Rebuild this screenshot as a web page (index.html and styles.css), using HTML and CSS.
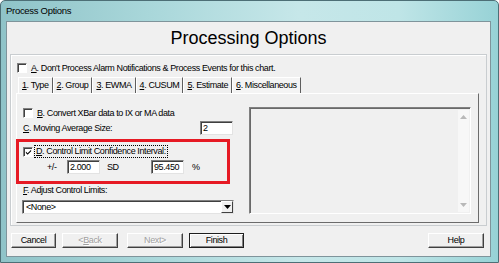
FILE: index.html
```html
<!DOCTYPE html>
<html lang="en">
<head>
    <meta charset="UTF-8">
    <title>Process Options</title>
    <link rel="stylesheet" href="styles.css">
</head>
<body>
    <div class="window">
        <div class="titlebar">Process Options</div>
        <div class="client">
            <h1>Processing Options</h1>

            <div class="group">
                <div class="check-row row-a">
                    <span class="box"></span>
                    <span><u>A</u>. Don't Process Alarm Notifications &amp; Process Events for this chart.</span>
                </div>

                <div class="tabs">
                    <span class="tab"><u>1</u>. Type</span>
                    <span class="tab"><u>2</u>. Group</span>
                    <span class="tab"><u>3</u>. EWMA</span>
                    <span class="tab"><u>4</u>. CUSUM</span>
                    <span class="tab"><u>5</u>. Estimate</span>
                    <span class="tab active"><u>6</u>. Miscellaneous</span>
                </div>

                <div class="page">
                    <div class="left">
                        <div class="check-row row-b">
                            <span class="box"></span>
                            <span><u>B</u>. Convert XBar data to IX or MA data</span>
                        </div>
                        <div class="row-c">
                            <span><u>C</u>. Moving Average Size:</span>
                            <span class="field size">2</span>
                        </div>
                        <div class="highlight">
                            <div class="check-row row-d">
                                <span class="box">
                                    <svg width="8" height="8" viewBox="0 0 8 8"><path d="M1 3.5 L3 5.5 L7 1.5 L7 3 L3 7 L1 5 Z" fill="#000"/></svg>
                                </span>
                                <span class="focus"><u>D</u>. Control Limit Confidence Interval:</span>
                            </div>
                            <div class="interval">
                                <span class="pm">+/-</span>
                                <span class="field num">2.000</span>
                                <span class="sd">SD</span>
                                <span class="field num">95.450</span>
                                <span class="pct">%</span>
                            </div>
                        </div>
                        <div class="label-f"><u>F</u>. Adjust Control Limits:</div>
                        <div class="combo">
                            <span class="combo-text">&lt;None&gt;</span>
                            <span class="combo-btn">
                                <svg width="7" height="4" viewBox="0 0 7 4"><path d="M0 0 H7 L3.5 4 Z" fill="#000"/></svg>
                            </span>
                        </div>
                    </div>
                    <div class="listbox">
                        <div class="scroll">
                            <svg width="7" height="4" viewBox="0 0 7 4"><path d="M0 4 H7 L3.5 0 Z" fill="#b8b8b8"/></svg>
                            <svg width="7" height="4" viewBox="0 0 7 4"><path d="M0 0 H7 L3.5 4 Z" fill="#b8b8b8"/></svg>
                        </div>
                    </div>
                </div>
            </div>

            <div class="buttons">
                <span class="btn cancel">Cancel</span>
                <span class="btn back disabled">&lt;<u>B</u>ack</span>
                <span class="btn next disabled">Next&gt;</span>
                <span class="btn finish">Finish</span>
                <span class="btn help">Help</span>
            </div>
        </div>
    </div>
</body>
</html>
```

FILE: styles.css
```css
body {
    margin: 0;
    font-family: "Liberation Sans", Arial, sans-serif;
    font-size: 9px;
    letter-spacing: -0.4px;
    color: #000;
}
.window {
    box-sizing: border-box;
    width: 499px;
    height: 263px;
    border: 1px solid #4d6f76;
    border-radius: 5px 5px 0 0;
    padding: 0 7px 5px 5px;
    display: flex;
    flex-direction: column;
    background: linear-gradient(90deg, #8fc3c8 0%, #a9d7da 30%, #c6e7e9 60%, #bfe5e7 80%, #97d2d6 100%);
}
.titlebar {
    height: 20px;
    line-height: 19px;
    font-size: 9.5px;
    letter-spacing: -0.3px;
}
.client {
    flex: 1;
    background: #f0f0f0;
    border: 1px solid #7f949b;
    display: flex;
    flex-direction: column;
}
h1 {
    margin: 5px 0 0;
    font: normal 18px/22px "Liberation Sans", Arial, sans-serif;
    letter-spacing: 0;
    text-align: center;
}
.group {
    margin: 5px 3px 0;
    height: 172px;
    box-sizing: border-box;
    border: 1px solid #c9cdd0;
    box-shadow: inset 1px 1px #fff;
}
.check-row {
    display: flex;
    align-items: center;
    height: 12px;
}
.box {
    box-sizing: border-box;
    width: 10px;
    height: 10px;
    background: #fff;
    border: 1px solid;
    border-color: #808080 #fff #fff #808080;
    box-shadow: inset 1px 1px #404040;
    margin-right: 4px;
    display: flex;
    align-items: center;
    justify-content: center;
}
.box svg {
    margin: 1px 0 0 1px;
}
.row-a {
    margin: 7px 0 0 6px;
}
.tabs {
    display: flex;
    height: 16px;
    margin: 3px 0 0 7px;
}
.tab {
    box-sizing: border-box;
    height: 16px;
    line-height: 15px;
    padding: 0 3px;
    border-top: 1px solid #fff;
    border-left: 1px solid #fff;
    border-right: 1px solid #5e5e5e;
}
.tab.active {
    background: #f4f4f4;
}
.page {
    box-sizing: border-box;
    height: 130px;
    margin: 0 7px 0 5px;
    border: 1px solid;
    border-color: #fff #6b6b6b #6b6b6b #fff;
    display: flex;
}
.left {
    width: 211px;
    padding: 12px 0 0 6px;
}
.row-b {
    height: 13px;
}
.row-c {
    display: flex;
    align-items: center;
    justify-content: space-between;
    height: 14px;
    margin-top: 2px;
}
.field {
    box-sizing: border-box;
    height: 14px;
    line-height: 12px;
    padding-left: 2px;
    background: #fff;
    border: 1px solid;
    border-color: #808080 #e3e3e3 #e3e3e3 #808080;
    box-shadow: inset 1px 1px #404040;
}
.field.size {
    width: 33px;
    margin-right: 1px;
}
.highlight {
    box-sizing: border-box;
    width: 214px;
    height: 45px;
    margin: 4px 0 0 -7px;
    padding: 3px 0 0 4px;
    border: 3px solid #e61a24;
}
.row-d {
    height: 13px;
}
.focus {
    outline: 1px dotted #000;
    padding: 0 1px;
    line-height: 11px;
    margin-left: -2px;
}
.interval {
    display: flex;
    align-items: center;
    height: 14px;
    margin-top: 2px;
}
.pm {
    margin-left: 24px;
    width: 20px;
}
.field.num {
    width: 33px;
}
.sd {
    margin-left: 7px;
    width: 44px;
}
.pct {
    margin-left: 8px;
}
.label-f {
    line-height: 12px;
}
.combo {
    box-sizing: border-box;
    display: flex;
    align-items: center;
    justify-content: space-between;
    width: 212px;
    height: 14px;
    margin: 4px 0 0 -1px;
    background: #fff;
    border: 1px solid;
    border-color: #808080 #e3e3e3 #e3e3e3 #808080;
    box-shadow: inset 1px 1px #404040;
}
.combo-text {
    padding-left: 3px;
}
.combo-btn {
    box-sizing: border-box;
    width: 12px;
    height: 12px;
    background: #f0f0f0;
    border: 1px solid;
    border-color: #fff #404040 #404040 #fff;
    display: flex;
    align-items: center;
    justify-content: center;
}
.listbox {
    box-sizing: border-box;
    width: 222px;
    height: 107px;
    margin: 13px 0 0 15px;
    border: 1px solid;
    border-color: #808080 #fff #fff #808080;
    box-shadow: inset 1px 1px #696969;
    display: flex;
    justify-content: flex-end;
    padding: 2px 1px 1px 2px;
}
.scroll {
    width: 11px;
    background: #f7f7f7;
    display: flex;
    flex-direction: column;
    justify-content: space-between;
    align-items: center;
    padding: 5px 0;
}
.buttons {
    display: flex;
    margin: 7px 6px 0 4px;
}
.btn {
    box-sizing: border-box;
    height: 15px;
    line-height: 12px;
    text-align: center;
    background: #f0f0f0;
    border: 1px solid;
    border-color: #fff #404040 #404040 #fff;
    box-shadow: inset -1px -1px #a0a0a0;
}
.cancel {
    width: 45px;
}
.back {
    width: 56px;
    margin-left: 6px;
}
.next {
    width: 56px;
    margin-left: 9px;
}
.finish {
    width: 55px;
    margin-left: 6px;
    border: 1px solid #1e1e1e;
    box-shadow: inset 1px 1px #fff, inset -1px -1px #808080;
}
.help {
    width: 56px;
    margin-left: auto;
}
.disabled {
    color: #a0a0a0;
    text-shadow: 1px 1px #fff;
}
```
